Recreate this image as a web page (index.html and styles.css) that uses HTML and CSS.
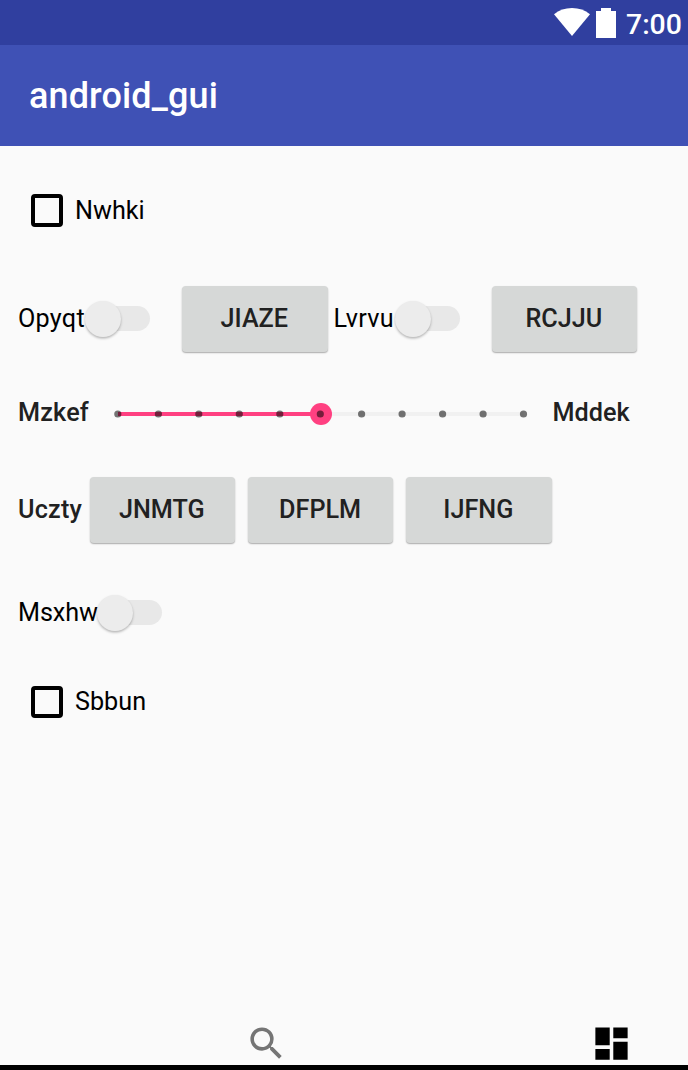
FILE: index.html
```html
<!DOCTYPE html>
<html lang="en">
<head>
<meta charset="utf-8">
<title>android_gui</title>
<link rel="stylesheet" href="styles.css">
</head>
<body>
<div class="screen">
  <div class="status">
    <svg class="wifi" width="36" height="28" viewBox="0 0 36 28"><path d="M0 6.2C5 2.2 11 0 18 0s13 2.2 18 6.2L18 28z" fill="#fff"/></svg>
    <svg class="battery" width="20" height="30" viewBox="0 0 20 30"><path d="M5 0h10v3h5v27H0V3h5z" fill="#fff"/></svg>
    <span class="clock">7:00</span>
  </div>
  <header class="appbar"><h1 class="title">android_gui</h1></header>
  <main class="content">
    <label class="row row-first"><span class="checkbox"></span><span class="text">Nwhki</span></label>
    <div class="row row-switches">
      <span class="text label-a">Opyqt</span><span class="switch"><span class="thumb"></span></span>
      <button class="btn btn-a">JIAZE</button>
      <span class="text label-b">Lvrvu</span><span class="switch"><span class="thumb"></span></span>
      <button class="btn btn-b">RCJJU</button>
    </div>
    <div class="row row-slider">
      <span class="text strong label-c">Mzkef</span>
      <svg class="slider" width="424" height="24" viewBox="110 401 424 24">
        <path d="M118 414H523.5" stroke="#f1f1f1" stroke-width="4"/>
        <path d="M118 414H320" stroke="#ff4081" stroke-width="4"/>
        <circle cx="321" cy="414" r="11" fill="#ff4081"/>
        <g fill="#000" fill-opacity=".54">
          <circle cx="117.8" cy="414" r="3.6"/><circle cx="158.4" cy="414" r="3.6"/><circle cx="198.8" cy="414" r="3.6"/><circle cx="239.3" cy="414" r="3.6"/><circle cx="279.8" cy="414" r="3.6"/><circle cx="320.3" cy="414" r="3.6"/><circle cx="361.6" cy="414" r="3.6"/><circle cx="402.1" cy="414" r="3.6"/><circle cx="442.6" cy="414" r="3.6"/><circle cx="483.1" cy="414" r="3.6"/><circle cx="523.5" cy="414" r="3.6"/>
        </g>
      </svg>
      <span class="text strong label-d">Mddek</span>
    </div>
    <div class="row row-buttons">
      <span class="text strong label-e">Uczty</span>
      <div class="group"><button class="btn">JNMTG</button><button class="btn">DFPLM</button><button class="btn">IJFNG</button></div>
    </div>
    <div class="row row-single"><span class="text label-f">Msxhw</span><span class="switch"><span class="thumb"></span></span></div>
    <label class="row row-last"><span class="checkbox"></span><span class="text">Sbbun</span></label>
  </main>
  <nav class="nav">
    <svg class="search" width="43" height="43" viewBox="0 0 24 24"><path fill="#757575" d="M15.5 14h-.79l-.28-.27A6.47 6.47 0 0 0 16 9.5 6.5 6.5 0 1 0 9.5 16c1.61 0 3.09-.59 4.23-1.57l.27.28v.79l5 4.99L20.49 19l-4.99-5zm-6 0C7.01 14 5 11.99 5 9.5S7.01 5 9.5 5 14 7.01 14 9.5 11.99 14 9.5 14z"/></svg>
    <svg class="dash" width="43" height="43" viewBox="0 0 24 24"><path d="M3 13h8V3H3v10zm0 8h8v-6H3v6zm10 0h8V11h-8v10zm0-18v6h8V3h-8z"/></svg>
  </nav>
</div>
</body>
</html>
```
FILE: styles.css
```css
* { box-sizing: border-box; }
body { margin: 0; font-family: Roboto, "Liberation Sans", sans-serif; }
.screen { display: flex; flex-direction: column; width: 688px; height: 1070px; background: #fafafa; overflow: hidden; }
.status { display: flex; align-items: flex-start; justify-content: flex-end; height: 45px; padding: 8px 6px 0 0; background: #303f9f; }
.battery { margin: 0 10px 0 6px; }
.clock { width: 56px; color: #fff; font-size: 28.4px; font-weight: 500; line-height: 34px; white-space: nowrap; }
.appbar { display: flex; align-items: center; height: 101px; padding-left: 29px; background: #3f51b5; }
.title { margin: 0; color: #fff; font-size: 36px; font-weight: 500; line-height: 42px; letter-spacing: .12px; }
.content { flex: 1; padding-left: 18px; }
.row { display: flex; align-items: center; }
.row-first { height: 129px; padding-left: 12.5px; }
.row-switches { height: 88px; }
.row-slider { height: 100px; }
.row-buttons { height: 94px; }
.row-single { height: 112px; }
.row-last { height: 66px; padding-left: 12.5px; }
.text { font-size: 25.2px; line-height: 30px; color: #000; white-space: nowrap; }
.row-first .text { padding-top: 1px; }
.strong { font-weight: 500; color: #212121; }
.checkbox { width: 32.5px; height: 32.5px; margin-right: 12px; border: 4px solid #000; border-radius: 4px; }
.label-a { width: 67px; letter-spacing: .25px; }
.label-b { width: 61px; letter-spacing: .25px; }
.label-c { width: 92px; letter-spacing: .2px; }
.label-d { margin-left: 18.5px; }
.label-e { width: 71.5px; letter-spacing: .2px; }
.label-f { width: 79px; letter-spacing: -.1px; }
.switch { display: flex; align-items: center; width: 58px; height: 25px; margin: 0 0 1px 7px; border-radius: 13px; background: #e8e8e8; }
.thumb { flex: none; width: 36px; height: 36px; margin-left: -7px; border-radius: 50%; background: #ececec; box-shadow: 0 1.5px 2.5px rgba(0,0,0,.28); }
.btn { flex: none; width: 145.6px; height: 65.5px; border: 0; border-radius: 4px; padding: 0 1px 1px 0; background: #d6d8d7; color: #212121; font: 500 25.2px Roboto, sans-serif; box-shadow: 0 1px 1.5px rgba(0,0,0,.32); }
.btn-a { margin: 0 6px 0 32px; }
.btn-b { margin-left: 32px; }
.group { display: flex; gap: 12.7px; }
.nav { display: flex; height: 49px; padding: 1px 55px 0 245px; justify-content: space-between; border-bottom: 5px solid #000; }
```
